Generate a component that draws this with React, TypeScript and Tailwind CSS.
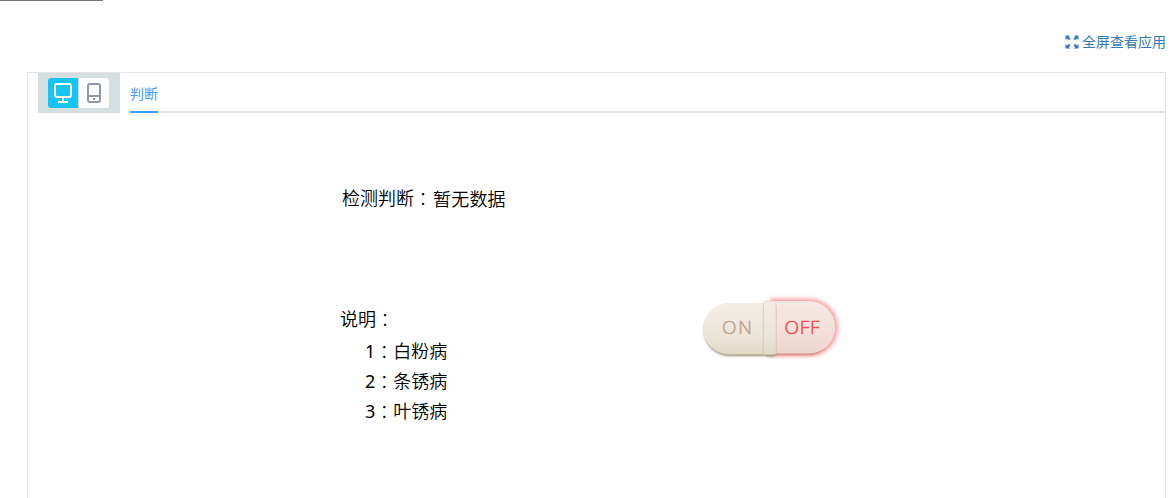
import type { ReactNode } from 'react'
import clsx from 'clsx'

const notes = [
  { no: '1', name: '白粉病' },
  { no: '2', name: '条锈病' },
  { no: '3', name: '叶锈病' },
]

// the TC face centres the full-width colon
function Colon() {
  return <span className="relative top-px font-['Noto_Sans_CJK_TC',sans-serif] font-light leading-none">：</span>
}

function ExpandIcon() {
  return (
    <svg width="14" height="14" viewBox="0 0 14 14" fill="#337ab7">
      <path d="M.5.5H5L3.7 1.8 5.5 3.6 3.8 5.3 2 3.5.5 5z" />
      <path d="M13.5.5H9l1.3 1.3-1.8 1.8 1.7 1.7L12 3.5 13.5 5z" />
      <path d="M.5 13.5H5l-1.3-1.3 1.8-1.8-1.7-1.7L2 10.500.5 9z" />
      <path d="M13.5 13.5H9l1.3-1.3-1.8-1.8 1.7-1.7 1.8 1.8L13.5 9z" />
    </svg>
  )
}

function DeviceButton({ active, children }: { active?: boolean; children: ReactNode }) {
  return (
    <button
      className={clsx(
        'flex h-[30px] w-[30px] items-start justify-center pt-[5px]',
        active ? 'rounded-l-[3px] bg-[#18c4f3]' : 'ml-px rounded-r-[3px] bg-white'
      )}
    >
      {children}
    </button>
  )
}

function PillSwitch() {
  return (
    <svg width="150" height="80" viewBox="695 288 150 80" className="block">
      <defs>
        <linearGradient id="on" x1="0" y1="0" x2="0" y2="1">
          <stop offset="0" stopColor="#f3ede6" />
          <stop offset="0.65" stopColor="#ebe5d8" />
          <stop offset="1" stopColor="#e0d9c6" />
        </linearGradient>
        <linearGradient id="off" x1="0" y1="0" x2="0" y2="1">
          <stop offset="0" stopColor="#f6e9e5" />
          <stop offset="0.6" stopColor="#f3dfd9" />
          <stop offset="1" stopColor="#ecd5cb" />
        </linearGradient>
        <filter id="glow" x="-20%" y="-20%" width="140%" height="140%">
          <feGaussianBlur stdDeviation="2" />
        </filter>
        <filter id="shade" x="-10%" y="-10%" width="120%" height="120%">
          <feGaussianBlur stdDeviation="0.8" />
        </filter>
      </defs>
      <path d="M770 299h39a28 28 0 0 1 0 57h-39z" fill="#ff9090" filter="url(#glow)" />
      <path d="M764 305h-34.5a25.5 25.5 0 0 0 0 51h34.5z" fill="#968a73" filter="url(#shade)" />
      <path d="M764 303h-35a25.7 25.7 0 0 0 0 51.4h35z" fill="url(#on)" />
      <path d="M775 306h33a24.5 24.5 0 0 1 0 49h-33z" fill="#c48b80" filter="url(#shade)" />
      <path d="M775 301h34a26.3 26.3 0 0 1 0 52.6h-34z" fill="url(#off)" />
      <rect x="764" y="305" width="11.5" height="51.5" rx="2" fill="#968a73" filter="url(#shade)" />
      <rect x="763.5" y="301" width="12.5" height="53.5" rx="2" fill="url(#on)" stroke="#d8cfc0" strokeWidth="0.6" />
      <g fontFamily="'Open Sans', sans-serif" fontSize="19" fontWeight="300" strokeWidth="0.5">
        <text x="722" y="334" textLength="30" fill="#bba58d" stroke="#bba58d">ON</text>
        <text x="784.5" y="334" textLength="35" fill="#f04c4c" stroke="#f04c4c">OFF</text>
      </g>
    </svg>
  )
}

export default function App() {
  return (
    <div className="h-[498px] w-[1173px] overflow-hidden bg-white font-['Noto_Sans','Noto_Sans_CJK_SC',sans-serif] text-black">
      <div className="h-px w-[103px] bg-[#777]" />
      <header className="flex h-[71px] justify-end pr-[7px] pt-[31px]">
        <a className="flex h-5 items-center gap-[3px] text-sm leading-5 text-[#337ab7]">
          <ExpandIcon />
          全屏查看应用
        </a>
      </header>

      <main className="ml-[27px] h-[440px] w-[1139px] border border-[#e5e5e5]">
        <div className="flex h-10 pl-[10px]">
          <div className="flex h-10 w-[82px] bg-[#d6dfdf] pl-[10px] pt-[5px]">
            <DeviceButton active>
              <svg width="18" height="20" viewBox="0 0 18 20" fill="none" stroke="white" strokeWidth="2">
                <rect x="1" y="1" width="16" height="13" rx="2" />
                <path d="M9 14v5M4 19h10" />
              </svg>
            </DeviceButton>
            <DeviceButton>
              <svg width="14" height="20" viewBox="0 0 14 20" fill="none" stroke="#8b98a8" strokeWidth="2">
                <rect x="1" y="1" width="12" height="18" rx="2" />
                <path d="M1 13h12" />
                <path d="M6 16h2" />
              </svg>
            </DeviceButton>
          </div>
          <nav className="ml-[10px] flex h-10 flex-1 border-b-2 border-[#dfe4ed]">
            <a className="h-10 border-b-2 border-[#409eff] text-sm leading-[42px] text-[#409eff]">判断</a>
          </nav>
        </div>

        <div className="flex text-lg font-[350]">
          <section className="ml-[314px] w-[353px] pt-[70px]">
            <div className="flex h-[31px] leading-[30px]">
              <span>检测判断<Colon /></span>
              <span className="ml-px pt-px tracking-[0.2px]">暂无数据</span>
            </div>
            <div className="-ml-[2px] mt-[90px] leading-[30px]">
              <p className="mb-[2px] h-[30px]">说明<Colon /></p>
              {notes.map((note) => (
                <p key={note.no} className="ml-[25px] h-[30px]">
                  <span className="font-normal">{note.no}</span><Colon />{note.name}
                </p>
              ))}
            </div>
          </section>
          <div className="pt-[175px]">
            <PillSwitch />
          </div>
        </div>
      </main>
    </div>
  )
}
